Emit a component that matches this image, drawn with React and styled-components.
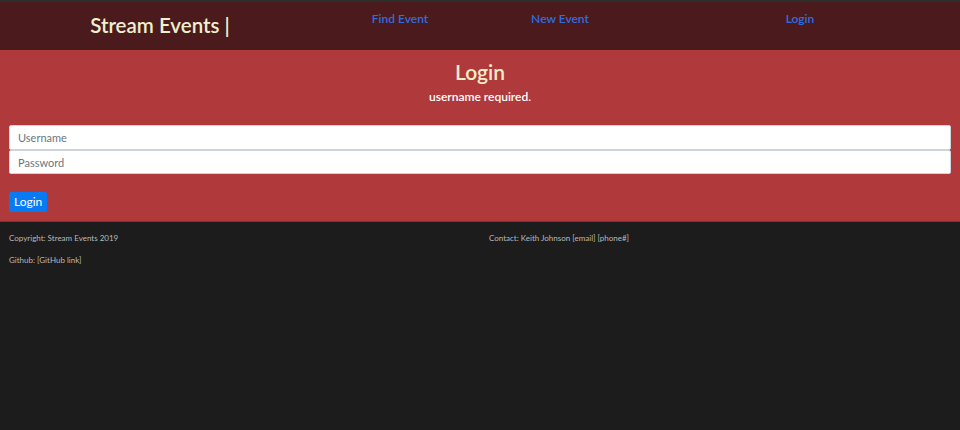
import React from "react";
import styled, { createGlobalStyle } from "styled-components";

const GlobalStyle = createGlobalStyle`
  html, body {
    margin: 0;
    padding: 0;
    background: #1c1c1c;
    font-family: Lato, "Noto Sans", sans-serif;
  }
`;

const Page = styled.div`
  display: flex;
  flex-direction: column;
  min-height: 430px;
  border-top: 2px solid #2e2e2e;
`;

const Header = styled.header`
  display: grid;
  grid-template-columns: 320px 160px 160px 320px;
  height: 48px;
  background: #4b1a1c;
`;

const Brand = styled.div`
  display: flex;
  align-items: center;
  justify-content: center;
  padding-bottom: 2px;
  color: #eef0cf;
  font-size: 20.5px;
  font-weight: 600;
`;

const NavLink = styled.a`
  display: block;
  text-align: center;
  padding-top: 9px;
  color: #2d6ee0;
  font-size: 12px;
  font-weight: 600;
  text-decoration: none;
`;

const Main = styled.main`
  background: #b0393b;
  padding: 10px 9px 9px;
`;

const Title = styled.h1`
  margin: 0;
  text-align: center;
  color: #f4ecc6;
  font-size: 21px;
  font-weight: 600;
  line-height: 24px;
`;

const Message = styled.p`
  margin: 5px 0 21px;
  text-align: center;
  color: #ffffff;
  font-size: 12px;
  font-weight: 600;
`;

const Form = styled.form`
  display: flex;
  flex-direction: column;
`;

const Field = styled.input`
  box-sizing: border-box;
  width: 100%;
  height: ${({ $h }) => $h}px;
  margin: 0;
  padding: 0 8px;
  border: 1px solid #cfd4da;
  border-radius: 2px;
  background: #fff;
  font-family: inherit;
  font-size: 11px;
  color: #495057;
  outline: none;
  &::placeholder {
    color: #6c757d;
  }
`;

const Button = styled.button`
  align-self: flex-start;
  margin-top: 18px;
  height: 20px;
  padding: 0 5px;
  border: none;
  border-radius: 2px;
  background: #087bf4;
  color: #fff;
  font-family: inherit;
  font-size: 12px;
  line-height: 20px;
`;

const Footer = styled.footer`
  flex: 1;
  display: grid;
  grid-template-columns: 480px 480px;
  align-content: start;
  padding-top: 10px;
  border-top: 1px solid #8a2d2f;
`;

const FootCol = styled.div`
  display: flex;
  flex-direction: column;
  gap: 10px;
  padding-left: 9px;
`;

const FootText = styled.span`
  color: #b9b9b9;
  font-size: 8px;
  line-height: 12px;
`;

export default function App() {
  return (
    <>
      <GlobalStyle />
      <Page>
        <Header>
          <Brand>Stream Events |</Brand>
          <NavLink href="#">Find Event</NavLink>
          <NavLink href="#">New Event</NavLink>
          <NavLink href="#">Login</NavLink>
        </Header>
        <Main>
          <Title>Login</Title>
          <Message>username required.</Message>
          <Form onSubmit={(e) => e.preventDefault()}>
            <Field $h={25} placeholder="Username" />
            <Field $h={24} type="password" placeholder="Password" />
            <Button type="submit">Login</Button>
          </Form>
        </Main>
        <Footer>
          <FootCol>
            <FootText>Copyright: Stream Events 2019</FootText>
            <FootText>Github: [GitHub link]</FootText>
          </FootCol>
          <FootCol>
            <FootText>Contact: Keith Johnson [email] [phone#]</FootText>
          </FootCol>
        </Footer>
      </Page>
    </>
  );
}
